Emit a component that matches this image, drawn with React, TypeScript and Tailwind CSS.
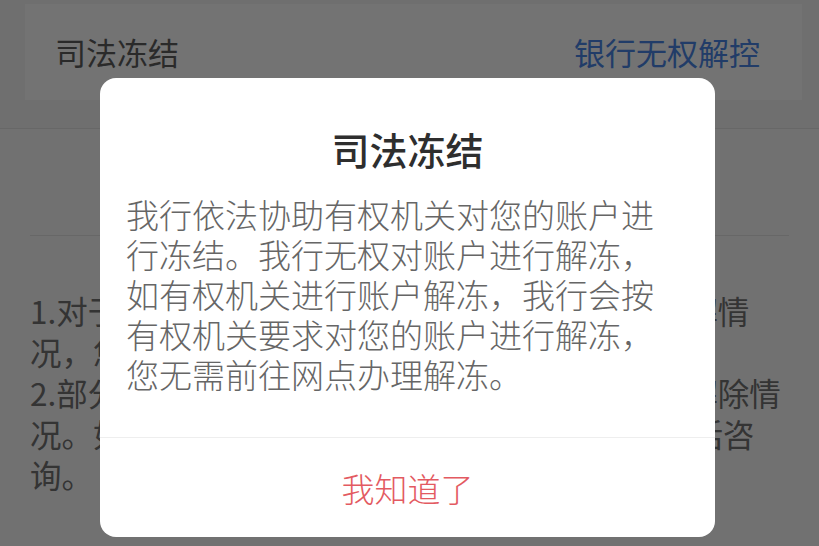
import React from "react";

const noticeLines = [
  "1.对于有权机关冻结的账户，请联系冻结机关了解情",
  "况，您也可以携带有效身份证件前往网点查询。",
  "2.部分账户存在多重冻结，请逐一向各机关确认解除情",
  "况。如有其他疑问，您可以拨打我行客服热线电话咨",
  "询。",
];

function FreezeDialog() {
  return (
    <div className="w-[615px] h-[459px] bg-white rounded-[16px] flex flex-col">
      <h2 className="pt-[47px] text-center text-[38px] leading-[48px] font-medium text-[#2e2e2e]">
        司法冻结
      </h2>
      <p className="mt-[21px] pl-[26px] pr-[40px] text-[33px] leading-[40px] font-light text-[#666666]">
        我行依法协助有权机关对您的账户进行冻结。我行无权对账户进行解冻，如有权机关进行账户解冻，我行会按有权机关要求对您的账户进行解冻，您无需前往网点办理解冻。
      </p>
      <div className="mt-auto h-[100px] border-t border-[#eeeeee] flex items-center justify-center">
        <button className="text-[33px] leading-[40px] font-light text-[#e35a61]">我知道了</button>
      </div>
    </div>
  );
}

export default function App() {
  return (
    <div className="relative w-[819px] h-[546px] overflow-hidden bg-[#f6f6f6] font-['Noto_Sans_CJK_SC','Noto_Sans',sans-serif]">
      {/* page behind the mask */}
      <div className="pt-[4px]">
        <div className="ml-[25px] w-[777px] h-[96px] bg-white flex items-center justify-between pl-[30px] pr-[42px]">
          <span className="text-[31px] text-[#5e5e5e]">司法冻结</span>
          <span className="text-[31px] text-[#4a86e6]">银行无权解控</span>
        </div>
        <div className="h-[28px]" />
        <section className="border-t border-[#e4e4e4] bg-[#fbfbfb] h-[420px]">
          <div className="mx-[30px] h-[107px] border-b border-[#e4e4e4]" />
          <div className="pl-[30px] pt-[54px] text-[31.5px] leading-[41px] text-[#737373]">
            {noticeLines.map((line) => (
              <div key={line} className="whitespace-nowrap">
                {line}
              </div>
            ))}
          </div>
        </section>
      </div>

      {/* mask + dialog */}
      <div className="absolute inset-0 bg-black/55 pt-[78px] pl-[100px]">
        <FreezeDialog />
      </div>
    </div>
  );
}
